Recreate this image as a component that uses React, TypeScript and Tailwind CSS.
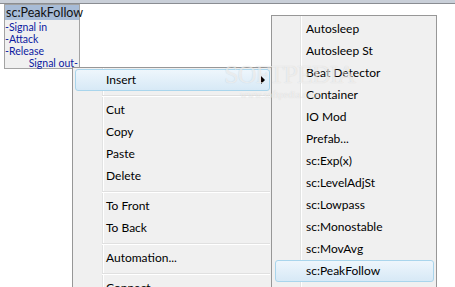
import React from 'react';
import clsx from 'clsx';

const mainItems: (string | null)[] = [
  'Insert',
  null,
  'Cut',
  'Copy',
  'Paste',
  'Delete',
  null,
  'To Front',
  'To Back',
  null,
  'Automation...',
  null,
  'Connect',
];

const insertItems = [
  'Autosleep',
  'Autosleep St',
  'Beat Detector',
  'Container',
  'IO Mod',
  'Prefab...',
  'sc:Exp(x)',
  'sc:LevelAdjSt',
  'sc:Lowpass',
  'sc:Monostable',
  'sc:MovAvg',
  'sc:PeakFollow',
];

const MenuItem: React.FC<{ label: string; active?: boolean; arrow?: boolean }> = ({ label, active, arrow }) => (
  <div
    className={clsx(
      'relative h-[22px] flex items-center pl-[30px] rounded-[3px] border',
      active ? 'border-[#a9d5ec] bg-gradient-to-b from-[#eef6fc] to-[#d7e9f6]' : 'border-transparent'
    )}
  >
    <span className="leading-none">{label}</span>
    {arrow && (
      <span className="absolute right-[4px] top-[6px] w-0 h-0 border-y-[4px] border-y-transparent border-l-[4px] border-l-black" />
    )}
  </div>
);

const Separator: React.FC<{ indent: string }> = ({ indent }) => (
  <div className={clsx('pt-[4px] pb-[2px]', indent)}>
    <div className="h-px bg-[#e0e0e0]" />
    <div className="h-px bg-white" />
  </div>
);

export default function App() {
  return (
    <div className="relative w-[455px] h-[287px] overflow-hidden bg-white font-['Lato',sans-serif] text-[12px] text-black">
      {/* window frame strip */}
      <div className="h-[4px] bg-[#c9cfd8] border-b border-[#8a8d92]" />

      {/* diagram node */}
      <div className="absolute left-[4px] top-[4px] w-[76px] h-[65px] border border-[#a3a3a3] bg-[#f0f0f0]">
        <div className="h-[15px] bg-[#a8bcd7] pl-px text-[12.5px] leading-[15px] text-[#111]">sc:PeakFollow</div>
        <div className="pt-[1px] text-[10.5px] leading-[12px] text-[#0c1aa0]">
          <div>-Signal in</div>
          <div>-Attack</div>
          <div>-Release</div>
          <div className="text-right pr-px">Signal out-</div>
        </div>
      </div>

      {/* context menu */}
      <div className="absolute left-[72px] top-[67px] w-[200px] border border-[#979797] bg-[#f0f0f0] pt-px pl-[2px] pr-px pb-2">
        <div className="absolute left-[29px] top-0 bottom-0 w-[2px] border-l border-[#e2e3e3] bg-white" />
        <div className="relative">
          {mainItems.map((label, i) =>
            label === null ? (
              <Separator key={i} indent="ml-[27px]" />
            ) : (
              <MenuItem key={i} label={label} active={label === 'Insert'} arrow={label === 'Insert'} />
            )
          )}
        </div>
      </div>

      {/* Insert submenu */}
      <div className="absolute left-[271px] top-[15px] w-[166px] border border-[#979797] bg-[#f0f0f0] pt-[2px] pl-[3px] pr-[2px] pb-6">
        <div className="absolute left-[28px] top-0 bottom-0 w-[2px] border-l border-[#e2e3e3] bg-white" />
        <div className="relative">
          {insertItems.map(label => (
            <MenuItem key={label} label={label} active={label === 'sc:PeakFollow'} />
          ))}
        </div>
      </div>

      {/* watermark */}
      <div className="pointer-events-none absolute left-[224px] top-[60px] font-['Liberation_Serif',serif] text-white/60 [text-shadow:0_0_1px_rgba(0,0,0,0.15)]">
        <div className="text-[26px] leading-[30px] tracking-[-1px]">SOFTPEDIA</div>
        <div className="pl-[16px] text-[10px] leading-[10px]">www.softpedia.com</div>
      </div>
    </div>
  );
}
